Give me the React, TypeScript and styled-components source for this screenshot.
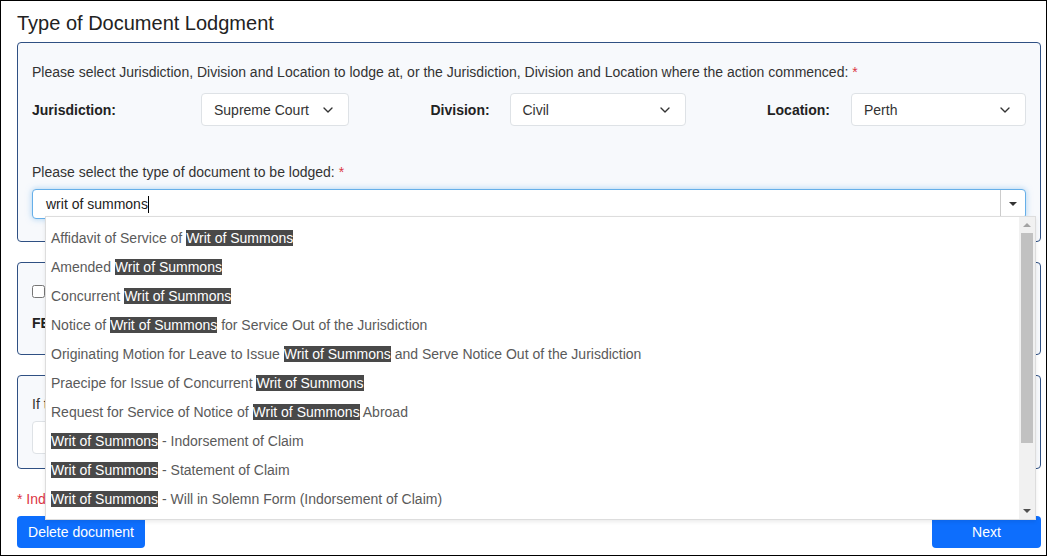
import styled, { createGlobalStyle } from "styled-components";
import { ChevronDown } from "lucide-react";

const GlobalStyle = createGlobalStyle`
  body {
    margin: 0;
    background: #fff;
    font-family: "Liberation Sans", Arial, sans-serif;
  }
`;

const Frame = styled.div`
  box-sizing: border-box;
  width: 1047px;
  height: 556px;
  border: 1px solid #000;
  padding: 0 5px 0 16px;
  overflow: hidden;
  font-size: 14px;
  color: #333;
`;

const Title = styled.h2`
  margin: 10px 0 7px;
  font-size: 20px;
  font-weight: normal;
  line-height: 24px;
  color: #222;
`;

const Panel = styled.section<{ $pad: string }>`
  border: 1px solid #2f5083;
  border-radius: 4px;
  background: #f7f9fc;
  padding: ${({ $pad }) => $pad};

  & + & {
    margin-top: 20px;
  }
`;

const Line = styled.div<{ $top?: number }>`
  line-height: 20px;
  margin-top: ${({ $top }) => $top ?? 0}px;
`;

const Required = styled.span`
  color: #dc3545;
`;

const SelectRow = styled.div`
  display: flex;
  justify-content: space-between;
  margin-top: 11px;
`;

const Field = styled.div`
  display: flex;
  align-items: center;
`;

const FieldLabel = styled.label<{ $w: number }>`
  width: ${({ $w }) => $w}px;
  font-weight: bold;
  color: #222;
`;

const SelectBox = styled.div<{ $w: number }>`
  box-sizing: border-box;
  width: ${({ $w }) => $w}px;
  height: 33px;
  border: 1px solid #dee2e6;
  border-radius: 4px;
  background: #fff;
  display: flex;
  align-items: center;
  justify-content: space-between;
  padding: 0 12px;
  color: #333;
`;

const Combo = styled.div`
  position: relative;
  margin-top: 7px;
  height: 30px;
  box-sizing: border-box;
  border: 1px solid #66afe9;
  border-radius: 4px;
  box-shadow: 0 0 6px rgba(102, 175, 233, 0.55);
  background: #fff;
  display: flex;
`;

const ComboText = styled.div`
  flex: 1;
  display: flex;
  align-items: center;
  padding-left: 13px;
  color: #222;
`;

const Caret = styled.span`
  display: inline-block;
  width: 1px;
  height: 17px;
  background: #000;
`;

const ComboToggle = styled.div`
  width: 24px;
  border-left: 1px solid #ccc;
  display: flex;
  align-items: center;
  justify-content: center;
`;

const Triangle = styled.span<{ $up?: boolean; $color?: string }>`
  width: 0;
  height: 0;
  border-left: 4px solid transparent;
  border-right: 4px solid transparent;
  ${({ $up, $color }) =>
    $up
      ? `border-bottom: 4px solid ${$color ?? "#333"};`
      : `border-top: 4px solid ${$color ?? "#333"};`}
`;

const Dropdown = styled.div`
  position: absolute;
  top: 26px;
  left: 12px;
  width: 991px;
  height: 304px;
  box-sizing: border-box;
  background: #fff;
  border: 1px solid #ddd;
  box-shadow: 0 2px 4px rgba(0, 0, 0, 0.08);
  display: flex;
  z-index: 10;
`;

const Options = styled.ul`
  flex: 1;
  list-style: none;
  margin: 0;
  padding: 7px 0 0;
  overflow: hidden;
`;

const Option = styled.li`
  height: 29px;
  line-height: 29px;
  padding-left: 5px;
  color: #5a5a5a;
  white-space: nowrap;
`;

const Hit = styled.mark`
  background: #494949;
  color: #fff;
`;

const Scrollbar = styled.div`
  width: 16px;
  background: #f1f1f1;
  display: flex;
  flex-direction: column;
  align-items: center;
`;

const ScrollArrow = styled.div`
  height: 16px;
  display: flex;
  align-items: center;
  justify-content: center;
`;

const Thumb = styled.div`
  width: 12px;
  height: 210px;
  background: #c1c1c1;
`;

const ScrollSpacer = styled.div`
  flex: 1;
`;

const CheckRow = styled.div`
  display: flex;
  align-items: center;
  gap: 6px;
  line-height: 20px;
`;

const Checkbox = styled.input`
  width: 13px;
  height: 13px;
  margin: 0;
`;

const Strong = styled.div`
  margin-top: 12px;
  line-height: 20px;
  font-weight: bold;
  color: #222;
`;

const TextBox = styled.div`
  margin-top: 7px;
  width: 300px;
  height: 33px;
  box-sizing: border-box;
  border: 1px solid #dee2e6;
  border-radius: 4px;
  background: #fff;
`;

const Note = styled.div`
  margin-top: 20px;
  line-height: 20px;
  color: #dc3545;
`;

const Footer = styled.div`
  display: flex;
  justify-content: space-between;
  margin-top: 7px;
`;

const Button = styled.button<{ $w: number }>`
  width: ${({ $w }) => $w}px;
  height: 32px;
  border: none;
  border-radius: 4px;
  background: #0d6efd;
  color: #fff;
  font-family: "Liberation Sans", Arial, sans-serif;
  font-size: 14px;
  padding: 0;
`;

const options: [string, string][] = [
  ["Affidavit of Service of ", ""],
  ["Amended ", ""],
  ["Concurrent ", ""],
  ["Notice of ", " for Service Out of the Jurisdiction"],
  ["Originating Motion for Leave to Issue ", " and Serve Notice Out of the Jurisdiction"],
  ["Praecipe for Issue of Concurrent ", ""],
  ["Request for Service of Notice of ", " Abroad"],
  ["", " - Indorsement of Claim"],
  ["", " - Statement of Claim"],
  ["", " - Will in Solemn Form (Indorsement of Claim)"],
  ["", " - Will in Solemn Form (Statement of Claim)"],
];

export default function App() {
  return (
    <>
      <GlobalStyle />
      <Frame>
        <Title>Type of Document Lodgment</Title>

        <Panel $pad="19px 14px 22px">
          <Line>
            Please select Jurisdiction, Division and Location to lodge at, or the
            Jurisdiction, Division and Location where the action commenced:{" "}
            <Required>*</Required>
          </Line>
          <SelectRow>
            <Field>
              <FieldLabel $w={169}>Jurisdiction:</FieldLabel>
              <SelectBox $w={148}>
                Supreme Court <ChevronDown size={16} strokeWidth={2} color="#333" />
              </SelectBox>
            </Field>
            <Field>
              <FieldLabel $w={79}>Division:</FieldLabel>
              <SelectBox $w={176}>
                Civil <ChevronDown size={16} strokeWidth={2} color="#333" />
              </SelectBox>
            </Field>
            <Field>
              <FieldLabel $w={84}>Location:</FieldLabel>
              <SelectBox $w={175}>
                Perth <ChevronDown size={16} strokeWidth={2} color="#333" />
              </SelectBox>
            </Field>
          </SelectRow>

          <Line $top={36}>
            Please select the type of document to be lodged: <Required>*</Required>
          </Line>
          <Combo>
            <ComboText>
              writ of summons
              <Caret />
            </ComboText>
            <ComboToggle>
              <Triangle />
            </ComboToggle>
            <Dropdown>
              <Options>
                {options.map(([before, after], i) => (
                  <Option key={i}>
                    {before}
                    <Hit>Writ of Summons</Hit>
                    {after}
                  </Option>
                ))}
              </Options>
              <Scrollbar>
                <ScrollArrow>
                  <Triangle $up $color="#a3a3a3" />
                </ScrollArrow>
                <Thumb />
                <ScrollSpacer />
                <ScrollArrow>
                  <Triangle $color="#505050" />
                </ScrollArrow>
              </Scrollbar>
            </Dropdown>
          </Combo>
        </Panel>

        <Panel $pad="18px 14px 21px">
          <CheckRow>
            <Checkbox type="checkbox" />
            This document is being lodged in an existing matter
          </CheckRow>
          <Strong>FEES: To be calculated</Strong>
        </Panel>

        <Panel $pad="18px 14px 14px">
          <Line>If this document relates to an existing matter, please enter the file number:</Line>
          <TextBox />
        </Panel>

        <Note>* Indicates required fields</Note>
        <Footer>
          <Button $w={128}>Delete document</Button>
          <Button $w={109}>Next</Button>
        </Footer>
      </Frame>
    </>
  );
}
